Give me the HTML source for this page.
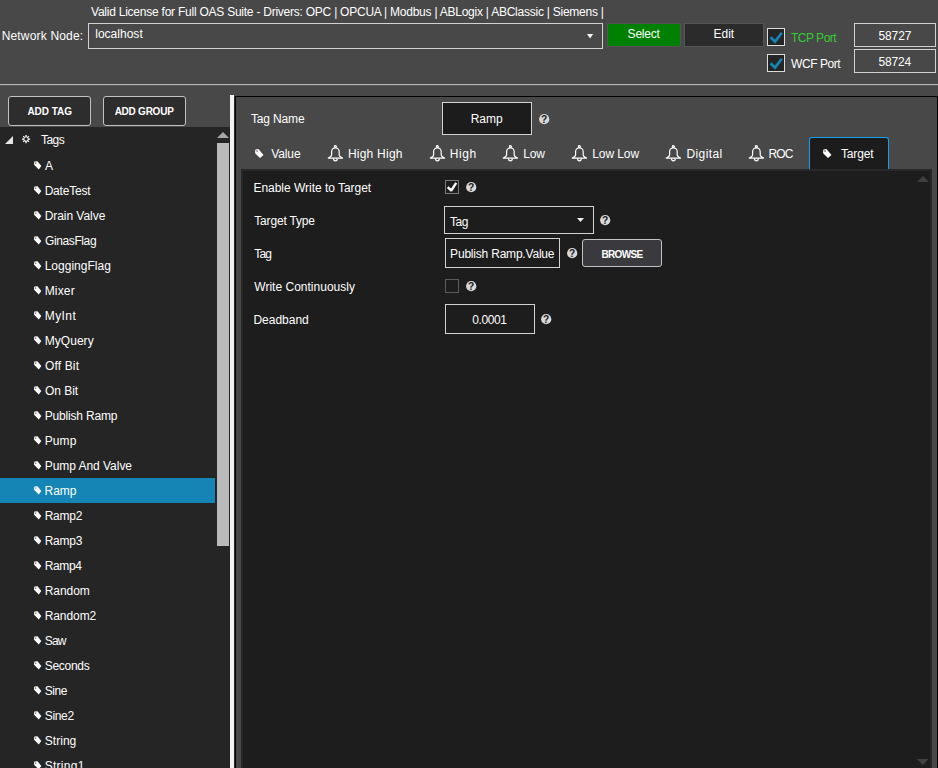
<!DOCTYPE html>
<html lang="en">
<head>
<meta charset="utf-8">
<title>OAS Configure Tags</title>
<style>
*{box-sizing:border-box;margin:0;padding:0}
html,body{width:938px;height:768px;overflow:hidden;background:#484848}
body{position:relative;font-family:"Liberation Sans",sans-serif;font-size:12px;color:#fff;line-height:14px}
.a{position:absolute;white-space:nowrap}
.t{position:absolute;white-space:nowrap;height:14px;line-height:14px}
.box{position:absolute;border:1px solid #d2d2d2}
.btn{position:absolute;border:1px solid #c2c2c2;border-radius:3px;background:#2d2d2d;font-weight:bold;font-size:10.5px;text-align:center;letter-spacing:-0.2px}
.help{position:absolute;width:10.4px;height:10.4px;border-radius:50%;background:#d6d6d6;color:#222;font-weight:bold;font-size:10px;line-height:10.8px;text-align:center;letter-spacing:0}
svg{position:absolute;overflow:visible}
</style>
</head>
<body>

<!-- ===== top bar ===== -->
<div class="t" id="lic" style="left:91.05px;top:5px;letter-spacing:-0.238px;">Valid License for Full OAS Suite - Drivers: OPC | OPCUA | Modbus | ABLogix | ABClassic | Siemens |</div>
<div class="t" id="nn" style="left:1.64px;top:29px;letter-spacing:0.181px;">Network Node:</div>
<div class="box" style="left:88px;top:23px;width:515px;height:26px"></div>
<div class="t" id="lh" style="left:95.23px;top:27px;letter-spacing:0.018px;">localhost</div>
<svg style="left:587.2px;top:33.6px" width="7" height="5"><path d="M0 0H6.2L3.1 4.6Z" fill="#f4f4f4"/></svg>

<div class="a" style="left:607px;top:23px;width:74px;height:24px;background:#008000;border:1px solid #58515a"></div>
<div class="t" id="sel" style="left:627.61px;top:27px;letter-spacing:-0.211px;">Select</div>
<div class="a" style="left:684px;top:23px;width:80px;height:24px;background:#2b2b2b;border:1px solid #555"></div>
<div class="t" id="edt" style="left:713.46px;top:27px;letter-spacing:0.002px;">Edit</div>

<div class="box" style="left:767px;top:28px;width:18px;height:18px;background:#252525;border-color:#dcdcdc"></div>
<svg style="left:767px;top:28px" width="18" height="18"><path d="M3.6 9.2L8 13.6L14.8 4.7" fill="none" stroke="#1585b5" stroke-width="2.7"/></svg>
<div class="box" style="left:767px;top:54px;width:18px;height:18px;background:#252525;border-color:#dcdcdc"></div>
<svg style="left:767px;top:54px" width="18" height="18"><path d="M3.6 9.2L8 13.6L14.8 4.7" fill="none" stroke="#1585b5" stroke-width="2.7"/></svg>
<div class="t" id="tcp" style="left:790.94px;top:31px;letter-spacing:-0.483px;color:#32cd32">TCP Port</div>
<div class="t" id="wcf" style="left:791.03px;top:57px;letter-spacing:-0.441px;">WCF Port</div>
<div class="box" style="left:854px;top:23px;width:82px;height:24px"></div>
<div class="t" id="p1" style="left:878.50px;top:29px;letter-spacing:-0.129px;">58727</div>
<div class="box" style="left:854px;top:49px;width:82px;height:24px"></div>
<div class="t" id="p2" style="left:878.50px;top:55px;letter-spacing:-0.173px;">58724</div>

<div class="a" style="left:0;top:84px;width:938px;height:1px;background:#b9b9b9"></div>
<div class="a" style="left:0;top:85px;width:938px;height:1px;background:#555"></div>

<!-- ===== left side ===== -->
<div class="btn" style="left:8px;top:96px;width:83px;height:30px;line-height:28px"></div><div class="t" id="b1" style="left:27.40px;top:105px;letter-spacing:-0.037px;font-weight:bold;font-size:10px">ADD TAG</div>
<div class="btn" style="left:103px;top:96px;width:83px;height:30px;line-height:28px"></div><div class="t" id="b2" style="left:114.63px;top:105px;letter-spacing:-0.241px;font-weight:bold;font-size:10px">ADD GROUP</div>

<div class="a" id="tree" style="left:0;top:127px;width:230px;height:641px;background:#252525"></div>
<svg style="left:5px;top:136px" width="8" height="8"><path d="M8 0V8H0Z" fill="#e6e6e6"/></svg>
<svg id="gear" style="left:22.3px;top:134.9px" width="8.1" height="8.1" viewBox="-4.05 -4.05 8.1 8.1"><g stroke="#fff"><path stroke-width="1.3" d="M0 -4.1V4.1M-4.1 0H4.1"/><path stroke-width="1.05" d="M-2.9 -2.9L2.9 2.9M-2.9 2.9L2.9 -2.9"/></g><circle r="2.6" fill="#fff"/><circle r="1.75" fill="#252525"/></svg>
<div class="t" id="tags" style="left:41.01px;top:133px;letter-spacing:-0.535px;">Tags</div>
<svg style="left:33.7px;top:160.5px" width="9" height="9"><g transform="scale(0.96)"><path d="M0.15 1.3Q0.15 0.7 0.75 0.6L3.65 0.15L7.6 5.2L5 8.75L0.05 3.95Z M1.1 2.2a0.7 0.7 0 1 0 1.4 0a0.7 0.7 0 1 0 -1.4 0Z" fill="#fff" fill-rule="evenodd"/></g></svg><div class="t" id="r0" style="left:45.08px;top:159px;letter-spacing:0.000px;">A</div>
<svg style="left:33.7px;top:185.5px" width="9" height="9"><g transform="scale(0.96)"><path d="M0.15 1.3Q0.15 0.7 0.75 0.6L3.65 0.15L7.6 5.2L5 8.75L0.05 3.95Z M1.1 2.2a0.7 0.7 0 1 0 1.4 0a0.7 0.7 0 1 0 -1.4 0Z" fill="#fff" fill-rule="evenodd"/></g></svg><div class="t" id="r1" style="left:44.67px;top:184px;letter-spacing:-0.215px;">DateTest</div>
<svg style="left:33.7px;top:210.5px" width="9" height="9"><g transform="scale(0.96)"><path d="M0.15 1.3Q0.15 0.7 0.75 0.6L3.65 0.15L7.6 5.2L5 8.75L0.05 3.95Z M1.1 2.2a0.7 0.7 0 1 0 1.4 0a0.7 0.7 0 1 0 -1.4 0Z" fill="#fff" fill-rule="evenodd"/></g></svg><div class="t" id="r2" style="left:44.67px;top:209px;letter-spacing:-0.049px;">Drain Valve</div>
<svg style="left:33.7px;top:235.5px" width="9" height="9"><g transform="scale(0.96)"><path d="M0.15 1.3Q0.15 0.7 0.75 0.6L3.65 0.15L7.6 5.2L5 8.75L0.05 3.95Z M1.1 2.2a0.7 0.7 0 1 0 1.4 0a0.7 0.7 0 1 0 -1.4 0Z" fill="#fff" fill-rule="evenodd"/></g></svg><div class="t" id="r3" style="left:45.11px;top:234px;letter-spacing:-0.405px;">GinasFlag</div>
<svg style="left:33.7px;top:260.5px" width="9" height="9"><g transform="scale(0.96)"><path d="M0.15 1.3Q0.15 0.7 0.75 0.6L3.65 0.15L7.6 5.2L5 8.75L0.05 3.95Z M1.1 2.2a0.7 0.7 0 1 0 1.4 0a0.7 0.7 0 1 0 -1.4 0Z" fill="#fff" fill-rule="evenodd"/></g></svg><div class="t" id="r4" style="left:44.67px;top:259px;letter-spacing:0.010px;">LoggingFlag</div>
<svg style="left:33.7px;top:285.5px" width="9" height="9"><g transform="scale(0.96)"><path d="M0.15 1.3Q0.15 0.7 0.75 0.6L3.65 0.15L7.6 5.2L5 8.75L0.05 3.95Z M1.1 2.2a0.7 0.7 0 1 0 1.4 0a0.7 0.7 0 1 0 -1.4 0Z" fill="#fff" fill-rule="evenodd"/></g></svg><div class="t" id="r5" style="left:44.67px;top:284px;letter-spacing:0.182px;">Mixer</div>
<svg style="left:33.7px;top:310.5px" width="9" height="9"><g transform="scale(0.96)"><path d="M0.15 1.3Q0.15 0.7 0.75 0.6L3.65 0.15L7.6 5.2L5 8.75L0.05 3.95Z M1.1 2.2a0.7 0.7 0 1 0 1.4 0a0.7 0.7 0 1 0 -1.4 0Z" fill="#fff" fill-rule="evenodd"/></g></svg><div class="t" id="r6" style="left:44.72px;top:309px;letter-spacing:0.420px;">MyInt</div>
<svg style="left:33.7px;top:335.5px" width="9" height="9"><g transform="scale(0.96)"><path d="M0.15 1.3Q0.15 0.7 0.75 0.6L3.65 0.15L7.6 5.2L5 8.75L0.05 3.95Z M1.1 2.2a0.7 0.7 0 1 0 1.4 0a0.7 0.7 0 1 0 -1.4 0Z" fill="#fff" fill-rule="evenodd"/></g></svg><div class="t" id="r7" style="left:44.67px;top:334px;letter-spacing:0.055px;">MyQuery</div>
<svg style="left:33.7px;top:360.5px" width="9" height="9"><g transform="scale(0.96)"><path d="M0.15 1.3Q0.15 0.7 0.75 0.6L3.65 0.15L7.6 5.2L5 8.75L0.05 3.95Z M1.1 2.2a0.7 0.7 0 1 0 1.4 0a0.7 0.7 0 1 0 -1.4 0Z" fill="#fff" fill-rule="evenodd"/></g></svg><div class="t" id="r8" style="left:45.03px;top:359px;letter-spacing:0.138px;">Off Bit</div>
<svg style="left:33.7px;top:385.5px" width="9" height="9"><g transform="scale(0.96)"><path d="M0.15 1.3Q0.15 0.7 0.75 0.6L3.65 0.15L7.6 5.2L5 8.75L0.05 3.95Z M1.1 2.2a0.7 0.7 0 1 0 1.4 0a0.7 0.7 0 1 0 -1.4 0Z" fill="#fff" fill-rule="evenodd"/></g></svg><div class="t" id="r9" style="left:45.03px;top:384px;letter-spacing:-0.044px;">On Bit</div>
<svg style="left:33.7px;top:410.5px" width="9" height="9"><g transform="scale(0.96)"><path d="M0.15 1.3Q0.15 0.7 0.75 0.6L3.65 0.15L7.6 5.2L5 8.75L0.05 3.95Z M1.1 2.2a0.7 0.7 0 1 0 1.4 0a0.7 0.7 0 1 0 -1.4 0Z" fill="#fff" fill-rule="evenodd"/></g></svg><div class="t" id="r10" style="left:44.67px;top:409px;letter-spacing:-0.167px;">Publish Ramp</div>
<svg style="left:33.7px;top:435.5px" width="9" height="9"><g transform="scale(0.96)"><path d="M0.15 1.3Q0.15 0.7 0.75 0.6L3.65 0.15L7.6 5.2L5 8.75L0.05 3.95Z M1.1 2.2a0.7 0.7 0 1 0 1.4 0a0.7 0.7 0 1 0 -1.4 0Z" fill="#fff" fill-rule="evenodd"/></g></svg><div class="t" id="r11" style="left:44.67px;top:434px;letter-spacing:0.114px;">Pump</div>
<svg style="left:33.7px;top:460.5px" width="9" height="9"><g transform="scale(0.96)"><path d="M0.15 1.3Q0.15 0.7 0.75 0.6L3.65 0.15L7.6 5.2L5 8.75L0.05 3.95Z M1.1 2.2a0.7 0.7 0 1 0 1.4 0a0.7 0.7 0 1 0 -1.4 0Z" fill="#fff" fill-rule="evenodd"/></g></svg><div class="t" id="r12" style="left:44.67px;top:459px;letter-spacing:-0.035px;">Pump And Valve</div>
<div class="a" style="left:0;top:478px;width:215px;height:25px;background:#1585b5"></div>
<svg style="left:33.7px;top:485.5px" width="9" height="9"><g transform="scale(0.96)"><path d="M0.15 1.3Q0.15 0.7 0.75 0.6L3.65 0.15L7.6 5.2L5 8.75L0.05 3.95Z M1.1 2.2a0.7 0.7 0 1 0 1.4 0a0.7 0.7 0 1 0 -1.4 0Z" fill="#fff" fill-rule="evenodd"/></g></svg><div class="t" id="r13" style="left:44.60px;top:484px;letter-spacing:-0.093px;">Ramp</div>
<svg style="left:33.7px;top:510.5px" width="9" height="9"><g transform="scale(0.96)"><path d="M0.15 1.3Q0.15 0.7 0.75 0.6L3.65 0.15L7.6 5.2L5 8.75L0.05 3.95Z M1.1 2.2a0.7 0.7 0 1 0 1.4 0a0.7 0.7 0 1 0 -1.4 0Z" fill="#fff" fill-rule="evenodd"/></g></svg><div class="t" id="r14" style="left:44.67px;top:509px;letter-spacing:-0.248px;">Ramp2</div>
<svg style="left:33.7px;top:535.5px" width="9" height="9"><g transform="scale(0.96)"><path d="M0.15 1.3Q0.15 0.7 0.75 0.6L3.65 0.15L7.6 5.2L5 8.75L0.05 3.95Z M1.1 2.2a0.7 0.7 0 1 0 1.4 0a0.7 0.7 0 1 0 -1.4 0Z" fill="#fff" fill-rule="evenodd"/></g></svg><div class="t" id="r15" style="left:44.67px;top:534px;letter-spacing:-0.248px;">Ramp3</div>
<svg style="left:33.7px;top:560.5px" width="9" height="9"><g transform="scale(0.96)"><path d="M0.15 1.3Q0.15 0.7 0.75 0.6L3.65 0.15L7.6 5.2L5 8.75L0.05 3.95Z M1.1 2.2a0.7 0.7 0 1 0 1.4 0a0.7 0.7 0 1 0 -1.4 0Z" fill="#fff" fill-rule="evenodd"/></g></svg><div class="t" id="r16" style="left:44.67px;top:559px;letter-spacing:-0.338px;">Ramp4</div>
<svg style="left:33.7px;top:585.5px" width="9" height="9"><g transform="scale(0.96)"><path d="M0.15 1.3Q0.15 0.7 0.75 0.6L3.65 0.15L7.6 5.2L5 8.75L0.05 3.95Z M1.1 2.2a0.7 0.7 0 1 0 1.4 0a0.7 0.7 0 1 0 -1.4 0Z" fill="#fff" fill-rule="evenodd"/></g></svg><div class="t" id="r17" style="left:44.67px;top:584px;letter-spacing:-0.037px;">Random</div>
<svg style="left:33.7px;top:610.5px" width="9" height="9"><g transform="scale(0.96)"><path d="M0.15 1.3Q0.15 0.7 0.75 0.6L3.65 0.15L7.6 5.2L5 8.75L0.05 3.95Z M1.1 2.2a0.7 0.7 0 1 0 1.4 0a0.7 0.7 0 1 0 -1.4 0Z" fill="#fff" fill-rule="evenodd"/></g></svg><div class="t" id="r18" style="left:44.67px;top:609px;letter-spacing:-0.078px;">Random2</div>
<svg style="left:33.7px;top:635.5px" width="9" height="9"><g transform="scale(0.96)"><path d="M0.15 1.3Q0.15 0.7 0.75 0.6L3.65 0.15L7.6 5.2L5 8.75L0.05 3.95Z M1.1 2.2a0.7 0.7 0 1 0 1.4 0a0.7 0.7 0 1 0 -1.4 0Z" fill="#fff" fill-rule="evenodd"/></g></svg><div class="t" id="r19" style="left:44.75px;top:634px;letter-spacing:-0.846px;">Saw</div>
<svg style="left:33.7px;top:660.5px" width="9" height="9"><g transform="scale(0.96)"><path d="M0.15 1.3Q0.15 0.7 0.75 0.6L3.65 0.15L7.6 5.2L5 8.75L0.05 3.95Z M1.1 2.2a0.7 0.7 0 1 0 1.4 0a0.7 0.7 0 1 0 -1.4 0Z" fill="#fff" fill-rule="evenodd"/></g></svg><div class="t" id="r20" style="left:44.75px;top:659px;letter-spacing:-0.297px;">Seconds</div>
<svg style="left:33.7px;top:685.5px" width="9" height="9"><g transform="scale(0.96)"><path d="M0.15 1.3Q0.15 0.7 0.75 0.6L3.65 0.15L7.6 5.2L5 8.75L0.05 3.95Z M1.1 2.2a0.7 0.7 0 1 0 1.4 0a0.7 0.7 0 1 0 -1.4 0Z" fill="#fff" fill-rule="evenodd"/></g></svg><div class="t" id="r21" style="left:44.75px;top:684px;letter-spacing:-0.419px;">Sine</div>
<svg style="left:33.7px;top:710.5px" width="9" height="9"><g transform="scale(0.96)"><path d="M0.15 1.3Q0.15 0.7 0.75 0.6L3.65 0.15L7.6 5.2L5 8.75L0.05 3.95Z M1.1 2.2a0.7 0.7 0 1 0 1.4 0a0.7 0.7 0 1 0 -1.4 0Z" fill="#fff" fill-rule="evenodd"/></g></svg><div class="t" id="r22" style="left:44.75px;top:709px;letter-spacing:-0.342px;">Sine2</div>
<svg style="left:33.7px;top:735.5px" width="9" height="9"><g transform="scale(0.96)"><path d="M0.15 1.3Q0.15 0.7 0.75 0.6L3.65 0.15L7.6 5.2L5 8.75L0.05 3.95Z M1.1 2.2a0.7 0.7 0 1 0 1.4 0a0.7 0.7 0 1 0 -1.4 0Z" fill="#fff" fill-rule="evenodd"/></g></svg><div class="t" id="r23" style="left:44.75px;top:734px;letter-spacing:0.040px;">String</div>
<svg style="left:33.7px;top:760.5px" width="9" height="9"><g transform="scale(0.96)"><path d="M0.15 1.3Q0.15 0.7 0.75 0.6L3.65 0.15L7.6 5.2L5 8.75L0.05 3.95Z M1.1 2.2a0.7 0.7 0 1 0 1.4 0a0.7 0.7 0 1 0 -1.4 0Z" fill="#fff" fill-rule="evenodd"/></g></svg><div class="t" id="r24" style="left:44.72px;top:759px;letter-spacing:0.264px;">String1</div>
<!-- scrollbar -->
<svg style="left:217px;top:132px" width="12" height="6"><path d="M0 6H12L6 0Z" fill="#a6a6a6"/></svg>
<div class="a" style="left:217px;top:143px;width:12px;height:403px;background:#bababa"></div>

<!-- splitter -->
<div class="a" style="left:230px;top:95px;width:4px;height:673px;background:#f2f2f2"></div>

<!-- ===== main panel ===== -->
<div class="a" style="left:234px;top:96px;width:1px;height:680px;background:#2e2e2e"></div>
<div class="a" id="panel" style="left:235px;top:96px;width:703px;height:680px;border:1px solid #000"></div>

<div class="t" id="tagname" style="left:250.93px;top:112px;letter-spacing:-0.146px;">Tag Name</div>
<div class="box" style="left:442px;top:102px;width:90px;height:33px;background:#1c1c1c"></div>
<div class="t" id="ramp" style="left:470.64px;top:112px;letter-spacing:0.011px;">Ramp</div>
<svg style="left:538.8px;top:114.0px" width="10.4" height="10.4"><circle cx="5.2" cy="5.2" r="5.1" fill="#d8d8d8"/><text x="5.2" y="9.1" text-anchor="middle" font-family="Liberation Sans, sans-serif" font-size="10.2" font-weight="bold" fill="#1a1a22">?</text></svg>

<!-- tabs -->
<svg style="left:254.6px;top:148.5px" width="9" height="9"><path d="M0.2 1.3Q0.2 0.7 0.8 0.6L3.4 0.1L8.5 6.1L5 9L0.1 4.2Z M1.3 2.1a0.75 0.75 0 1 0 1.5 0a0.75 0.75 0 1 0 -1.5 0Z" fill="#fff" fill-rule="evenodd"/></svg><div class="t" id="tb0" style="left:271.16px;top:147px;letter-spacing:-0.101px;">Value</div>
<svg style="left:328px;top:144.7px" width="16" height="17"><g fill="none" stroke="#fff" stroke-width="1.2" stroke-linejoin="round"><circle cx="7.4" cy="1.45" r="0.95"/><path d="M3.6 10V6.7a3.8 3.8 0 0 1 7.6 0V10C11.2 11.6 13.2 12 14.5 13.05H0.3C1.6 12 3.6 11.6 3.6 10Z"/><path d="M5.5 13.4a1.9 2.4 0 0 0 3.8 0"/></g></svg><div class="t" id="tb1" style="left:347.93px;top:147px;letter-spacing:0.230px;">High High</div>
<svg style="left:430.2px;top:144.7px" width="16" height="17"><g fill="none" stroke="#fff" stroke-width="1.2" stroke-linejoin="round"><circle cx="7.4" cy="1.45" r="0.95"/><path d="M3.6 10V6.7a3.8 3.8 0 0 1 7.6 0V10C11.2 11.6 13.2 12 14.5 13.05H0.3C1.6 12 3.6 11.6 3.6 10Z"/><path d="M5.5 13.4a1.9 2.4 0 0 0 3.8 0"/></g></svg><div class="t" id="tb2" style="left:449.64px;top:147px;letter-spacing:0.643px;">High</div>
<svg style="left:503.2px;top:144.7px" width="16" height="17"><g fill="none" stroke="#fff" stroke-width="1.2" stroke-linejoin="round"><circle cx="7.4" cy="1.45" r="0.95"/><path d="M3.6 10V6.7a3.8 3.8 0 0 1 7.6 0V10C11.2 11.6 13.2 12 14.5 13.05H0.3C1.6 12 3.6 11.6 3.6 10Z"/><path d="M5.5 13.4a1.9 2.4 0 0 0 3.8 0"/></g></svg><div class="t" id="tb3" style="left:523.28px;top:147px;letter-spacing:-0.125px;">Low</div>
<svg style="left:572.1px;top:144.7px" width="16" height="17"><g fill="none" stroke="#fff" stroke-width="1.2" stroke-linejoin="round"><circle cx="7.4" cy="1.45" r="0.95"/><path d="M3.6 10V6.7a3.8 3.8 0 0 1 7.6 0V10C11.2 11.6 13.2 12 14.5 13.05H0.3C1.6 12 3.6 11.6 3.6 10Z"/><path d="M5.5 13.4a1.9 2.4 0 0 0 3.8 0"/></g></svg><div class="t" id="tb4" style="left:592.18px;top:147px;letter-spacing:-0.068px;">Low Low</div>
<svg style="left:666px;top:144.7px" width="16" height="17"><g fill="none" stroke="#fff" stroke-width="1.2" stroke-linejoin="round"><circle cx="7.4" cy="1.45" r="0.95"/><path d="M3.6 10V6.7a3.8 3.8 0 0 1 7.6 0V10C11.2 11.6 13.2 12 14.5 13.05H0.3C1.6 12 3.6 11.6 3.6 10Z"/><path d="M5.5 13.4a1.9 2.4 0 0 0 3.8 0"/></g></svg><div class="t" id="tb5" style="left:686.46px;top:147px;letter-spacing:0.405px;">Digital</div>
<svg style="left:749.1px;top:144.7px" width="16" height="17"><g fill="none" stroke="#fff" stroke-width="1.2" stroke-linejoin="round"><circle cx="7.4" cy="1.45" r="0.95"/><path d="M3.6 10V6.7a3.8 3.8 0 0 1 7.6 0V10C11.2 11.6 13.2 12 14.5 13.05H0.3C1.6 12 3.6 11.6 3.6 10Z"/><path d="M5.5 13.4a1.9 2.4 0 0 0 3.8 0"/></g></svg><div class="t" id="tb6" style="left:768.46px;top:147px;letter-spacing:-0.900px;">ROC</div>
<div class="a" style="left:809px;top:137px;width:80px;height:33px;background:#1c1c1c;border:1px solid #12a0f0;border-bottom:none;border-radius:3px 3px 0 0"></div>
<svg style="left:823.4px;top:148.6px" width="9" height="9"><path d="M0.2 1.3Q0.2 0.7 0.8 0.6L3.4 0.1L8.5 6.1L5 9L0.1 4.2Z M1.3 2.1a0.75 0.75 0 1 0 1.5 0a0.75 0.75 0 1 0 -1.5 0Z" fill="#fff" fill-rule="evenodd"/></svg><div class="t" id="tb7" style="left:841.01px;top:147px;letter-spacing:-0.165px;">Target</div>

<!-- tab content -->
<div class="a" id="content" style="left:241px;top:169px;width:691px;height:610px;background:#1d1d1d;border:2px solid #282828"></div>
<svg style="left:917px;top:176px" width="12" height="6"><path d="M0 6H12L6 0Z" fill="#404040"/></svg>
<svg style="left:917px;top:759px" width="12" height="6"><path d="M0 0H11.6L5.8 6Z" fill="#424242"/></svg>

<div class="t" id="f0" style="left:253.46px;top:181px;letter-spacing:-0.029px;">Enable Write to Target</div>
<div class="box" style="left:445px;top:180px;width:14px;height:14px;border-color:#7a7a7a"></div>
<svg style="left:445px;top:180px" width="14" height="14"><path d="M2.7 7.2L6.3 10.5L11.2 2.8" fill="none" stroke="#fff" stroke-width="2.4" stroke-linejoin="bevel"/></svg>
<svg style="left:465.8px;top:181.8px" width="10.4" height="10.4"><circle cx="5.2" cy="5.2" r="5.1" fill="#d8d8d8"/><text x="5.2" y="9.1" text-anchor="middle" font-family="Liberation Sans, sans-serif" font-size="10.2" font-weight="bold" fill="#1a1a22">?</text></svg>

<div class="t" id="f1" style="left:254.26px;top:214px;letter-spacing:-0.173px;">Target Type</div>
<div class="box" style="left:444px;top:206px;width:150px;height:28px"></div>
<div class="t" id="cbt" style="left:449.96px;top:214.5px;letter-spacing:-0.416px;">Tag</div>
<svg style="left:577px;top:218px" width="7" height="4"><path d="M0 0H7L3.5 4Z" fill="#f0f0f0"/></svg>
<svg style="left:599.8px;top:215.2px" width="10.4" height="10.4"><circle cx="5.2" cy="5.2" r="5.1" fill="#d8d8d8"/><text x="5.2" y="9.1" text-anchor="middle" font-family="Liberation Sans, sans-serif" font-size="10.2" font-weight="bold" fill="#1a1a22">?</text></svg>

<div class="t" id="f2" style="left:254.26px;top:247px;letter-spacing:-0.781px;">Tag</div>
<div class="box" style="left:445px;top:238px;width:115px;height:30px"></div>
<div class="t" id="tbt" style="left:450.12px;top:247px;letter-spacing:-0.203px;">Publish Ramp.Value</div>
<svg style="left:566.8px;top:248.0px" width="10.4" height="10.4"><circle cx="5.2" cy="5.2" r="5.1" fill="#d8d8d8"/><text x="5.2" y="9.1" text-anchor="middle" font-family="Liberation Sans, sans-serif" font-size="10.2" font-weight="bold" fill="#1a1a22">?</text></svg>
<div class="btn" style="left:582px;top:239px;width:80px;height:28px;line-height:26.5px;background:#3a3a3e"></div><div class="t" id="b3" style="left:601.42px;top:247.5px;letter-spacing:-0.650px;font-weight:bold;font-size:10px">BROWSE</div>

<div class="t" id="f3" style="left:254.31px;top:280px;letter-spacing:0.008px;">Write Continuously</div>
<div class="box" style="left:445px;top:279px;width:14px;height:14px;border-color:#5a5a5a"></div>
<svg style="left:465.8px;top:281.2px" width="10.4" height="10.4"><circle cx="5.2" cy="5.2" r="5.1" fill="#d8d8d8"/><text x="5.2" y="9.1" text-anchor="middle" font-family="Liberation Sans, sans-serif" font-size="10.2" font-weight="bold" fill="#1a1a22">?</text></svg>

<div class="t" id="f4" style="left:253.46px;top:313px;letter-spacing:-0.012px;">Deadband</div>
<div class="box" style="left:445px;top:304px;width:90px;height:30px"></div>
<div class="t" id="dbt" style="left:472.20px;top:313px;letter-spacing:-0.402px;">0.0001</div>
<svg style="left:541.3px;top:313.8px" width="10.4" height="10.4"><circle cx="5.2" cy="5.2" r="5.1" fill="#d8d8d8"/><text x="5.2" y="9.1" text-anchor="middle" font-family="Liberation Sans, sans-serif" font-size="10.2" font-weight="bold" fill="#1a1a22">?</text></svg>

</body>
</html>
